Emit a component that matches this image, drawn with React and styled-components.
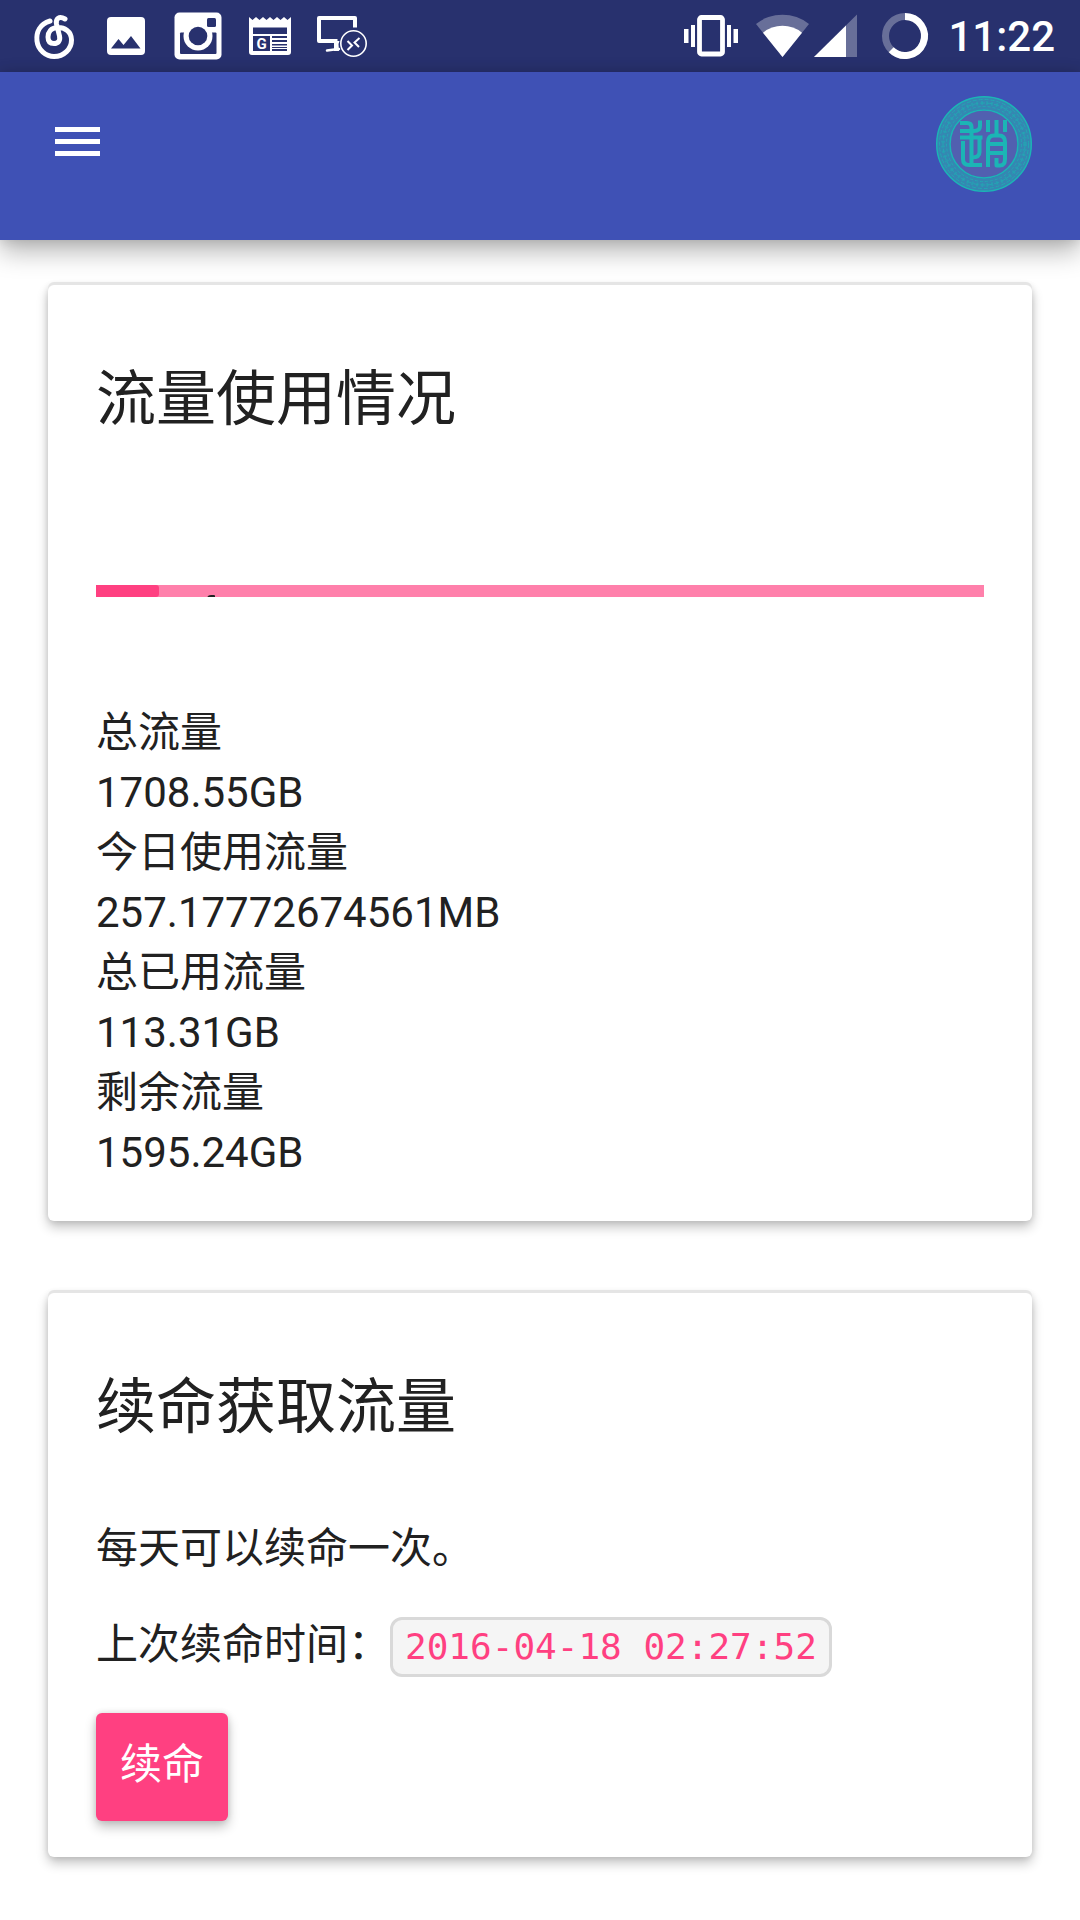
import React from 'react'
import styled, { createGlobalStyle } from 'styled-components'

const GlobalStyle = createGlobalStyle`
	* {
		box-sizing: border-box;
	}

	body {
		margin: 0;
		background-color: #ffffff;
		color: #212121;
		font-family: Roboto, 'Noto Sans CJK SC', sans-serif;
		font-size: 42px;
		line-height: 60px;
	}
`

const StatusBar = styled.div`
	display: flex;
	justify-content: space-between;
	align-items: center;
	height: 72px;
	padding: 0 25px 0 18px;
	background-color: #28316e;
	color: #ffffff;
`

const IconGroup = styled.div`
	display: flex;
	align-items: center;
`

const StatusIcon = styled.svg`
	display: block;
	width: ${(props) => props.$width || 72}px;
	height: 72px;
	fill: #ffffff;
`

const Clock = styled.time`
	margin-left: 9px;
	padding-top: 2px;
	font-weight: 500;
`

const NavBar = styled.header`
	display: flex;
	justify-content: space-between;
	align-items: flex-start;
	height: 168px;
	padding: 24px 48px 48px;
	background-color: #3f51b5;
	box-shadow: 0 0 12px rgba(0, 0, 0, 0.14), 0 12px 24px rgba(0, 0, 0, 0.28);
`

const MenuButton = styled.button`
	display: flex;
	align-items: center;
	width: 60px;
	height: 92px;
	padding: 0;
	border: none;
	background: none;
	cursor: pointer;
	svg {
		width: 60px;
		height: 60px;
		fill: #ffffff;
	}
`

const Avatar = styled.a`
	display: block;
	width: 96px;
	height: 96px;
	border-radius: 50%;
	svg {
		display: block;
	}
`

const Content = styled.main`
	display: flex;
	flex-direction: column;
	gap: 72px;
	padding: 45px 48px 63px;
`

const Card = styled.section`
	padding: 79px 48px 36px;
	border-radius: 6px;
	background-color: #ffffff;
	box-shadow: 0 -3px 0 #e5e5e5, 0 0 6px rgba(0, 0, 0, 0.12), 0 6px 12px rgba(0, 0, 0, 0.24);
`

const Title = styled.h2`
	margin: 0;
	font-size: 60px;
	font-weight: 400;
	line-height: 72px;
`

const ProgressWrap = styled.div`
	position: relative;
	height: 12px;
	margin: 149px 0 106px;
	overflow: hidden;
	&::after {
		content: '';
		position: absolute;
		left: 111px;
		bottom: -2px;
		width: 8px;
		height: 4px;
		border-radius: 4px 1px 0 0;
		background-color: #212121;
	}
`

const Progress = styled.progress`
	display: block;
	width: 100%;
	height: 12px;
	border: none;
	appearance: none;
	&::-webkit-progress-bar {
		background-color: #ff80ab;
	}
	&::-webkit-progress-value {
		border-radius: 0 3px 3px 0;
		background-color: #ff4081;
	}
`

const Stats = styled.dl`
	margin: 0 0 2px;
	dd {
		margin: 0;
	}
`

const Text = styled.p`
	margin: 0 0 36px;
`

const Intro = styled(Text)`
	margin-top: 75px;
`

const Code = styled.code`
	display: inline-block;
	height: 60px;
	padding: 0 12px;
	border: 3px solid #d9d9d9;
	border-radius: 12px;
	background-color: #f5f5f5;
	color: #ff4081;
	font-family: 'DejaVu Sans Mono', monospace;
	font-size: 36px;
	line-height: 54px;
`

const Button = styled.button`
	display: block;
	padding: 22px 24px 26px;
	border: none;
	border-radius: 6px;
	background-color: #ff4081;
	color: #ffffff;
	font: inherit;
	box-shadow: 0 0 6px rgba(0, 0, 0, 0.12), 0 6px 12px rgba(0, 0, 0, 0.24);
	cursor: pointer;
`

const stats = [
	{ label: '总流量', value: '1708.55GB' },
	{ label: '今日使用流量', value: '257.17772674561MB' },
	{ label: '总已用流量', value: '113.31GB' },
	{ label: '剩余流量', value: '1595.24GB' },
]

function MusicIcon() {
	return (
		<StatusIcon viewBox='0 0 72 72'>
			<path
				d='M32 21C22 24 18 32 19 41C20 50 28 56.5 36 56.5C46 56.5 53.5 49 53.5 40C53.5 31 46 27 39 27.5C33 28 30 32 30 37C30 41 32 43.5 36 43.5C40 43.5 42.5 41 41.5 36L38.5 24C37.5 19 41 15.5 47 19'
				fill='none'
				stroke='#fff'
				strokeWidth='5'
				strokeLinecap='round'
				strokeLinejoin='round'
			/>
		</StatusIcon>
	)
}

function PictureIcon() {
	return (
		<StatusIcon viewBox='0 0 72 72'>
			<rect x='17' y='17' width='38' height='38' rx='4' />
			<path d='M21 48.5L28.5 39L33.5 45L41 36L50.5 48.5Z' fill='#28316e' />
		</StatusIcon>
	)
}

function CameraIcon() {
	return (
		<StatusIcon viewBox='0 0 72 72'>
			<rect x='12.5' y='12.5' width='47' height='47' rx='5' />
			<rect x='18' y='32.5' width='36.5' height='21.5' rx='1' fill='#28316e' />
			<circle cx='36' cy='36' r='14.5' />
			<circle cx='36' cy='36' r='9.3' fill='#28316e' />
			<rect x='45' y='18' width='9' height='9' rx='1.5' fill='#28316e' />
		</StatusIcon>
	)
}

function NewsIcon() {
	return (
		<StatusIcon viewBox='0 0 72 72'>
			<path d='M15 17L18.5 20L22 17L25.5 20L29 17L32.5 20L36 17L39.5 20L43 17L46.5 20L50 17L53.5 20L57 17V52Q57 55 54 55H18Q15 55 15 52Z' />
			<g fill='#28316e'>
				<rect x='19' y='27.5' width='34' height='6.5' />
				<rect x='19' y='36' width='17' height='15' />
				<rect x='38' y='36' width='15' height='2' />
				<rect x='38' y='40' width='15' height='2' />
				<rect x='38' y='44' width='15' height='1.5' />
				<rect x='38' y='47' width='15' height='1' />
				<rect x='38' y='49' width='15' height='2' />
			</g>
			<text x='27.5' y='48.5' textAnchor='middle' fontSize='15' fontWeight='700'>G</text>
		</StatusIcon>
	)
}

function RemoteIcon() {
	return (
		<StatusIcon viewBox='0 0 72 72'>
			<g fill='none' stroke='#fff'>
				<path d='M49 27.5V18H13V41H31.5' strokeWidth='4' strokeLinejoin='round' />
				<path d='M21 50.5L32 49H33' strokeWidth='2.5' strokeLinecap='round' />
				<circle cx='47.5' cy='43.5' r='12.7' strokeWidth='1.6' />
				<path d='M41.5 41L46 45.5L41.5 50M53.5 38L48.5 42.5L53 47' strokeWidth='2' />
			</g>
			<path d='M28 41H33.5L32.5 44L33 51H28Z' />
		</StatusIcon>
	)
}

function VibrateIcon() {
	return (
		<StatusIcon viewBox='0 0 72 72'>
			<rect x='24.5' y='17.5' width='23' height='36.5' rx='2' fill='none' stroke='#fff' strokeWidth='4.8' />
			<rect x='9' y='29' width='4.5' height='14' />
			<rect x='16' y='25' width='4' height='22' />
			<rect x='52' y='25' width='4' height='22' />
			<rect x='58.5' y='29' width='4.5' height='14' />
		</StatusIcon>
	)
}

function WifiIcon() {
	return (
		<StatusIcon $width={66} viewBox='0 0 66 72'>
			<path d='M35.5 57L9 24A42.3 42.3 0 0 1 62 24Z' opacity='.3' />
			<path d='M35.5 57L16 32.7A31.2 31.2 0 0 1 55 32.7Z' />
		</StatusIcon>
	)
}

function SignalIcon() {
	return (
		<StatusIcon $width={54} viewBox='0 0 54 72'>
			<path d='M1 57H44V14.5Z' opacity='.3' />
			<path d='M1 57H33V25.5Z' />
		</StatusIcon>
	)
}

function BatteryIcon() {
	return (
		<StatusIcon viewBox='0 0 72 72'>
			<g fill='none' stroke='#fff' strokeWidth='7'>
				<circle cx='38' cy='36' r='19.5' opacity='.3' />
				<path d='M38 16.5A19.5 19.5 0 1 1 24.2 49.8' />
			</g>
		</StatusIcon>
	)
}

function Seal() {
	return (
		<svg width='96' height='96' viewBox='0 0 96 96' fill='none' stroke='#1bb5b5'>
			<circle cx='48' cy='48' r='41' stroke='#3587b2' strokeWidth='13' />
			{/* fretwork round the rim */}
			<g strokeWidth='1' opacity='.7'>
				<circle cx='48' cy='48' r='44.5' strokeDasharray='4 2' />
				<circle cx='48' cy='48' r='41' strokeDasharray='2 3' strokeWidth='4' opacity='.6' />
				<circle cx='48' cy='48' r='41' strokeDasharray='5 2' />
				<circle cx='48' cy='48' r='37.5' strokeDasharray='3 2' />
			</g>
			<circle cx='48' cy='48' r='34' fill='#5160b0' strokeWidth='1.6' />
			<circle cx='48' cy='48' r='47.3' strokeWidth='1.4' />
			<g strokeWidth='4' strokeLinejoin='round'>
				<path d='M24 27H31Q35.5 27 35.5 31V69' />
				<path d='M24 35H38Q44 35 44 30V24.5' />
				<path d='M24 41.5H46.5' />
				<path d='M27 45V63Q27 69 33 69H46' />
				<path d='M43.5 43V56Q43.5 61.5 36 61.5' />
				<path d='M52 24V36M60.5 24V38M69 24V36' />
				<path d='M52 71V46Q52 39.5 58 39.5H63Q69 39.5 69 46V63Q69 69.5 64 69.5H60.5V62' />
				<path d='M52 48H69M52 57H69' />
			</g>
		</svg>
	)
}

export default function App() {
	return (
		<>
			<GlobalStyle />
			<StatusBar>
				<IconGroup>
					<MusicIcon />
					<PictureIcon />
					<CameraIcon />
					<NewsIcon />
					<RemoteIcon />
				</IconGroup>
				<IconGroup>
					<VibrateIcon />
					<WifiIcon />
					<SignalIcon />
					<BatteryIcon />
					<Clock>11:22</Clock>
				</IconGroup>
			</StatusBar>

			<NavBar>
				<MenuButton aria-label='菜单'>
					<svg viewBox='0 0 60 60'>
						<path d='M7 15H52V20H7ZM7 27H52V32H7ZM7 39H52V44H7Z' />
					</svg>
				</MenuButton>
				<Avatar href='#' aria-label='用户'>
					<Seal />
				</Avatar>
			</NavBar>

			<Content>
				<Card>
					<Title>流量使用情况</Title>
					<ProgressWrap>
						<Progress value={7.1} max={100} aria-label='流量使用情况' />
					</ProgressWrap>
					<Stats>
						{stats.map((stat) => (
							<React.Fragment key={stat.label}>
								<dt>{stat.label}</dt>
								<dd>{stat.value}</dd>
							</React.Fragment>
						))}
					</Stats>
				</Card>

				<Card>
					<Title>续命获取流量</Title>
					<Intro>每天可以续命一次。</Intro>
					<Text>
						上次续命时间：<Code>2016-04-18 02:27:52</Code>
					</Text>
					<Button>续命</Button>
				</Card>
			</Content>
		</>
	)
}
